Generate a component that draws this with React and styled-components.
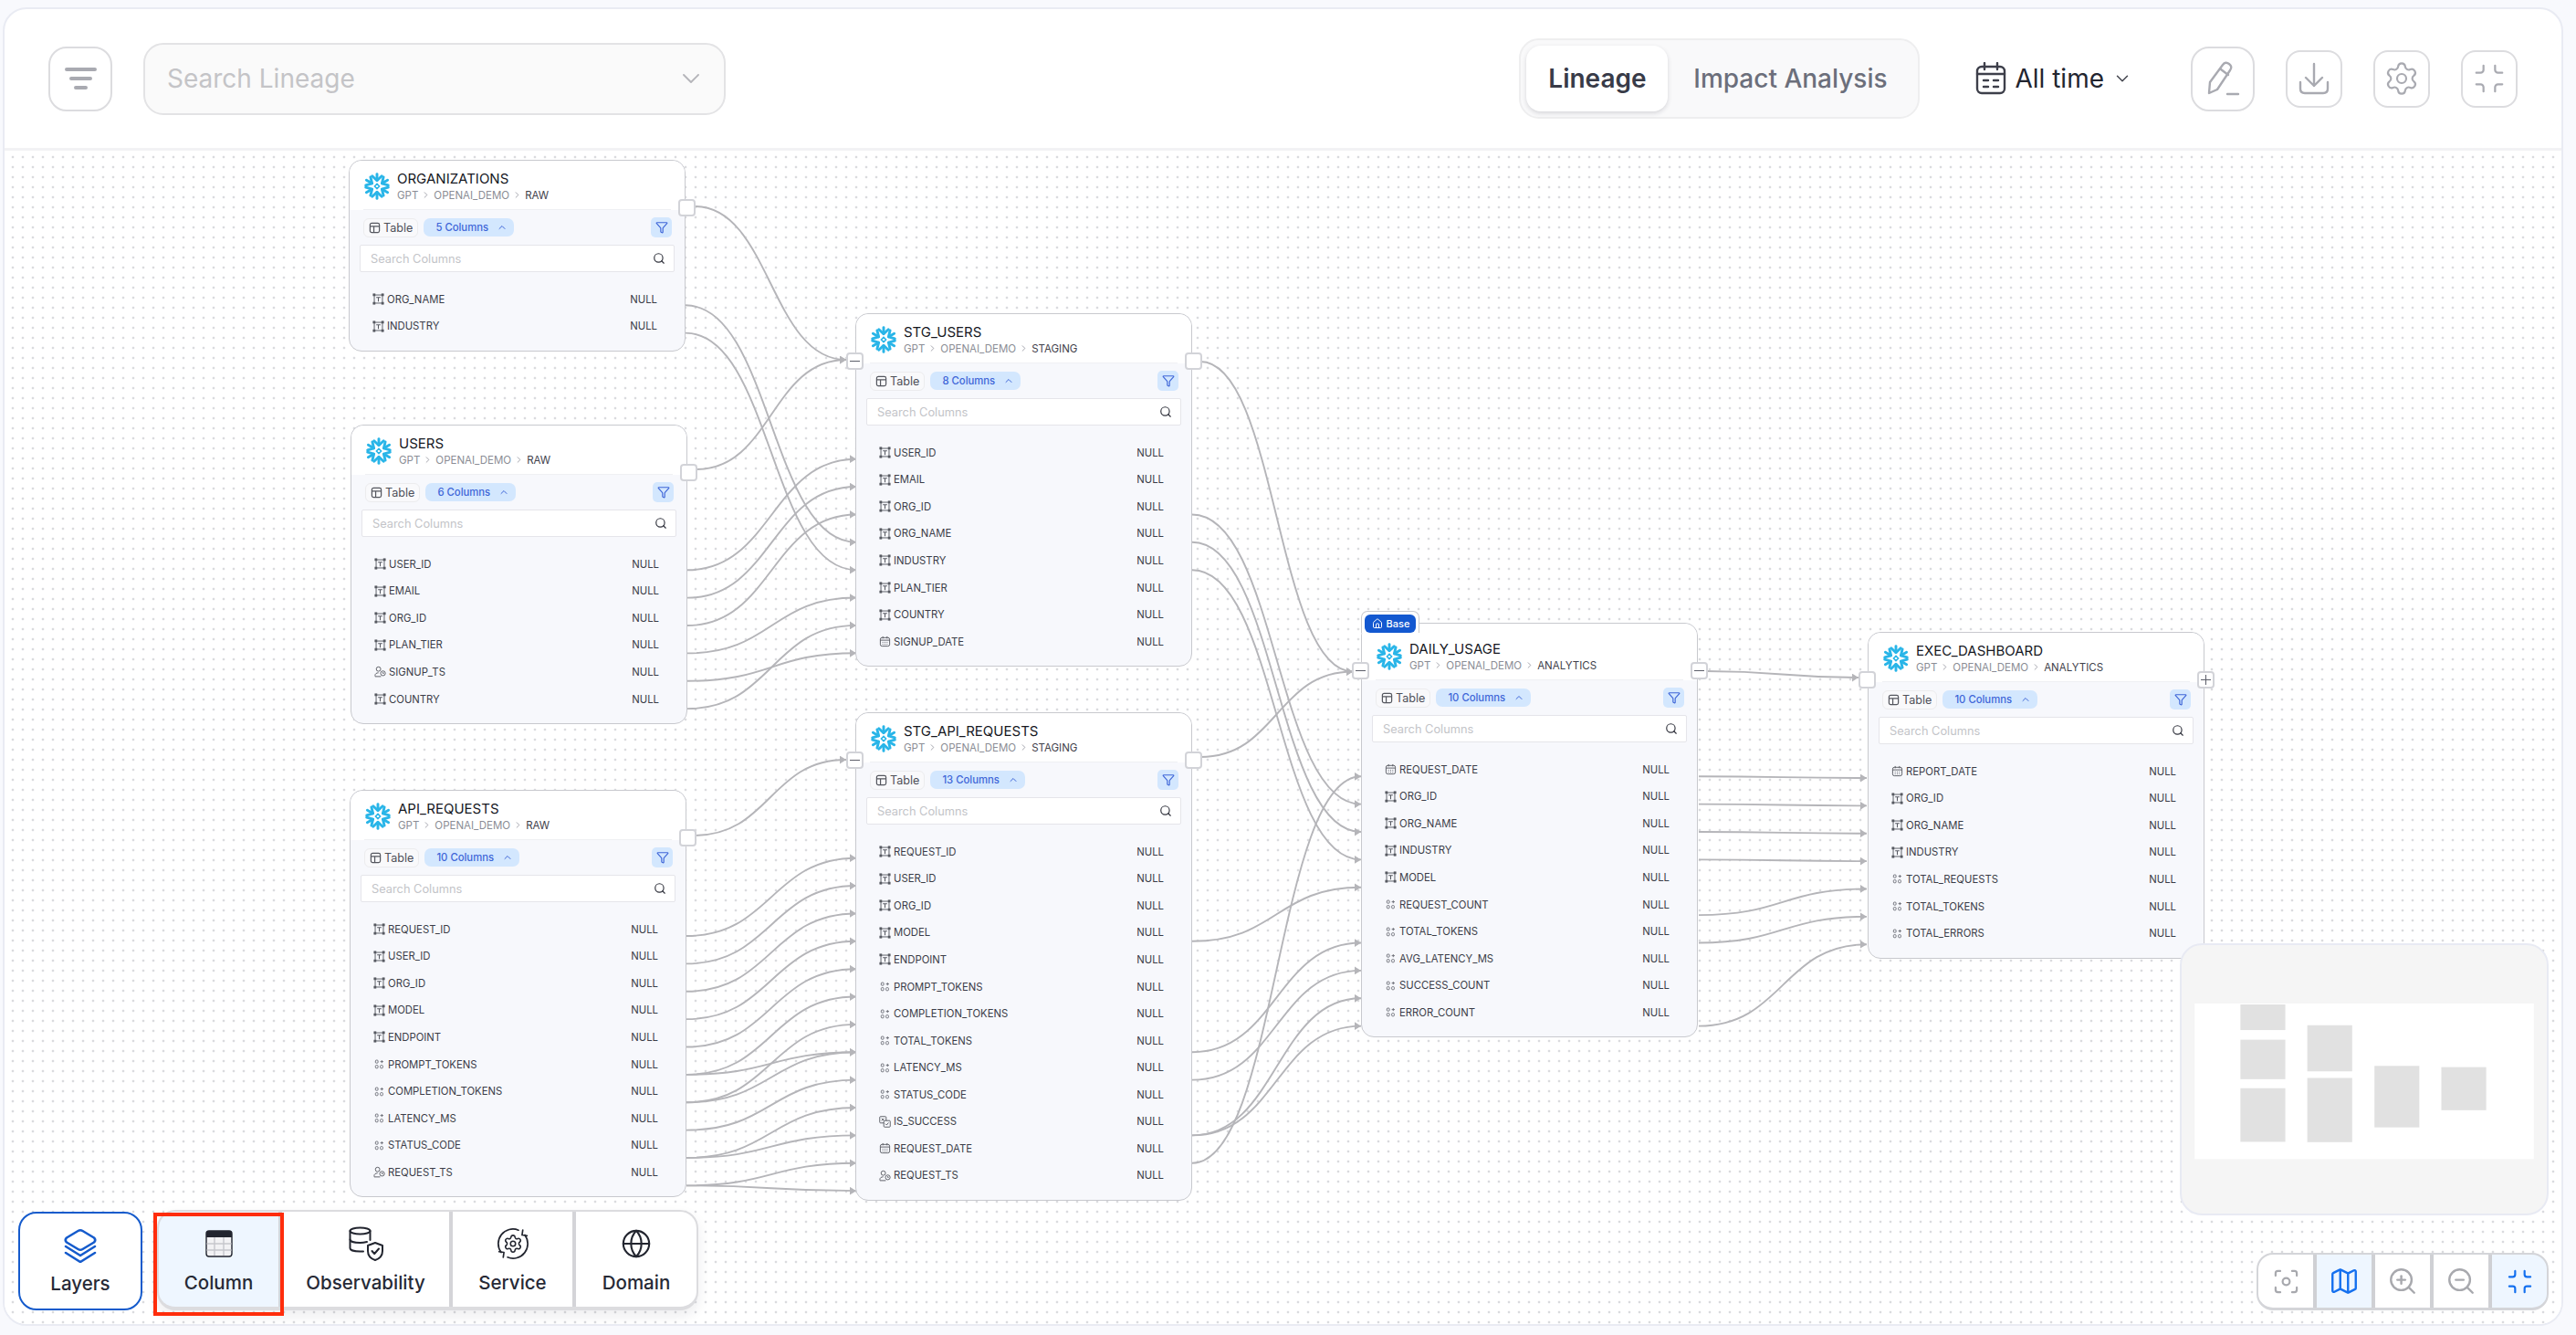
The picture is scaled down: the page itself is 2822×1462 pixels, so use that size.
import React from "react";
import styled, { createGlobalStyle } from "styled-components";
import {
  ChevronDown,
  ChevronRight,
  ChevronUp,
  Focus,
  Globe,
  Home,
  Map as MapIcon,
  Minimize,
  Funnel,
  Search,
  Settings,
  ZoomIn,
  ZoomOut,
} from "lucide-react";

const GlobalStyle = createGlobalStyle`
  html, body {
    margin: 0;
    padding: 0;
    background: #f8f9fd;
  }
  body, body * {
    font-family: Inter, "Noto Sans", "Liberation Sans", sans-serif;
    box-sizing: border-box;
  }
`;

///////////////////////frame/////////////////////
const Page = styled.div`
  width: 100%;
  height: 1462px;
  padding: 8px 14px 10px 3px;
  overflow: hidden;
`;

const Frame = styled.div`
  height: 100%;
  display: flex;
  flex-direction: column;
  background: #ffffff;
  border: 2px solid #e9ebf3;
  border-radius: 26px;
  overflow: hidden;
`;

const Header = styled.header`
  height: 155px;
  flex-shrink: 0;
  display: flex;
  align-items: center;
  padding: 0 48px 0 48px;
  border-bottom: 3px solid #f2f2f4;
`;

const IconButton = styled.button`
  width: ${(p) => p.$size}px;
  height: ${(p) => p.$size + 1}px;
  flex-shrink: 0;
  display: flex;
  align-items: center;
  justify-content: center;
  padding: 0;
  background: #ffffff;
  border: 2px solid #dcdcdf;
  border-radius: ${(p) => (p.$size > 64 ? 20 : 16)}px;
  color: #a9aab1;
  margin-left: ${(p) => p.$gap || 0}px;
`;

const LineageSearch = styled.div`
  width: 638px;
  height: 79px;
  margin-left: 34px;
  display: flex;
  align-items: center;
  justify-content: space-between;
  padding: 0 20px 0 24px;
  background: #fafafa;
  border: 2px solid #e3e3e5;
  border-radius: 22px;
  font-size: 28px;
  color: #c4c4c7;
`;

const Tabs = styled.div`
  margin-left: auto;
  display: flex;
  align-items: center;
  height: 88px;
  padding: 0 6px;
  background: #f9f9fa;
  border: 2px solid #eeeeef;
  border-radius: 22px;
`;

const Tab = styled.div`
  height: 72px;
  width: ${(p) => p.$width}px;
  display: flex;
  align-items: center;
  justify-content: center;
  font-size: 28px;
  font-weight: ${(p) => (p.$active ? 600 : 500)};
  color: ${(p) => (p.$active ? "#383b48" : "#6c6f7b")};
  background: ${(p) => (p.$active ? "#ffffff" : "transparent")};
  border-radius: 16px;
  box-shadow: ${(p) => (p.$active ? "0 2px 5px rgba(30, 30, 50, 0.16)" : "none")};
`;

const TimeRange = styled.div`
  display: flex;
  align-items: center;
  gap: 9px;
  margin-left: 61px;
  margin-right: 64px;
  font-size: 28px;
  color: #23252f;
`;

///////////////////////canvas/////////////////////
const Canvas = styled.div`
  position: relative;
  flex: 1;
  overflow: hidden;
  background-color: #ffffff;
  background-image: radial-gradient(circle, #a6a8b0 0.8px, transparent 1.1px);
  background-size: 11px 11px;
  background-position: 3.5px 1.5px;
`;

// viewport of the diagram, nodes inside it are placed in screen coordinates
const Viewport = styled.div`
  position: absolute;
  left: -5px;
  top: -165px;
  width: 2822px;
  height: 1462px;
`;

const EdgeLayer = styled.svg`
  position: absolute;
  left: 0;
  top: 0;
  width: 2822px;
  height: 1462px;
`;

///////////////////////node/////////////////////
const NodeBox = styled.div`
  position: absolute;
  left: ${(p) => p.$x}px;
  top: ${(p) => p.$y}px;
  width: 369px;
  background: #f7f8fc;
  border: 1.5px solid #c8c9ce;
  border-radius: 14px;
`;

const NodeHead = styled.div`
  display: flex;
  align-items: center;
  height: ${(p) => (p.$base ? 62 : 54)}px;
  padding: ${(p) => (p.$base ? "10px" : "2px")} 14px 0 15px;
  gap: 7px;
  background: #ffffff;
  border-radius: 14px 14px 0 0;
  position: relative;
  &::after {
    content: "";
    position: absolute;
    left: 15px;
    right: 15px;
    bottom: 0;
    height: 1px;
    background: #eff0f3;
  }
`;

const NodeTitle = styled.div`
  font-size: 15px;
  font-weight: 400;
  line-height: 18px;
  color: #16181f;
`;

const Crumbs = styled.div`
  display: flex;
  align-items: center;
  gap: 3px;
  margin-top: 1px;
  font-size: 11.5px;
  line-height: 16px;
  color: #8b8d95;
  strong {
    font-weight: 400;
    color: #3f414b;
  }
  svg {
    color: #9c9ea6;
  }
`;

const NodeBar = styled.div`
  display: flex;
  align-items: center;
  height: 38px;
  padding: 0 14px 0 15px;
  gap: 6px;
`;

const TypeChip = styled.div`
  display: flex;
  align-items: center;
  gap: 3px;
  height: 21px;
  padding: 0 5px;
  background: #f9f9fb;
  border: 1px solid #ececee;
  border-radius: 6px;
  font-size: 12.6px;
  color: #4e5059;
`;

const CountChip = styled.div`
  display: flex;
  align-items: center;
  gap: 9px;
  height: 20px;
  padding: 0 7px 0 13px;
  background: #d3e7fe;
  border-radius: 7px;
  font-size: 11.3px;
  font-weight: 500;
  color: #3f66d8;
`;

const FilterChip = styled.div`
  width: 23px;
  height: 22px;
  margin-left: auto;
  display: flex;
  align-items: center;
  justify-content: center;
  background: #d3e7fe;
  border-radius: 5px;
  color: #3f66d8;
`;

const ColumnSearch = styled.div`
  height: 30px;
  margin: 0 11px 15px;
  display: flex;
  align-items: center;
  justify-content: space-between;
  padding: 0 9px 0 11px;
  background: #ffffff;
  border: 1.5px solid #e5e5ea;
  border-radius: 2px;
  font-size: 12.8px;
  color: #c3c4c8;
  svg {
    color: #33353f;
  }
`;

const Rows = styled.div`
  padding-bottom: 12px;
`;

const Row = styled.div`
  height: 29.55px;
  display: flex;
  align-items: center;
  gap: 3px;
  padding: 0 30px 0 25px;
  font-size: 11.3px;
  color: #3b3d48;
  span:last-child {
    margin-left: auto;
  }
`;

const Handle = styled.div`
  position: absolute;
  top: 42px;
  ${(p) => (p.$side === "left" ? "left: -11.5px;" : "right: -12px;")}
  width: 19px;
  height: 19px;
  display: flex;
  align-items: center;
  justify-content: center;
  background: #ffffff;
  border: 2px solid #d2d3d8;
  border-radius: 4px;
  color: #5c5e69;
  font-size: 0;
  &::before {
    content: "";
    display: ${(p) => (p.$mark ? "block" : "none")};
    width: 11px;
    height: 1.5px;
    background: currentColor;
  }
  &::after {
    content: "";
    display: ${(p) => (p.$mark === "plus" ? "block" : "none")};
    position: absolute;
    width: 1.5px;
    height: 11px;
    background: currentColor;
  }
`;

const BaseTab = styled.div`
  position: absolute;
  z-index: 2;
  left: -1.5px;
  top: -14px;
  padding: 3px 3px 0;
  background: #ffffff;
  border: 1.5px solid #c8c9ce;
  border-bottom: none;
  border-radius: 7px 7px 0 0;
`;

const BaseBadge = styled.div`
  display: flex;
  align-items: center;
  gap: 4px;
  height: 20px;
  padding: 0 7px 0 8px;
  background: #1358d0;
  border-radius: 6px;
  font-size: 11px;
  font-weight: 500;
  color: #ffffff;
`;

///////////////////////overlays/////////////////////
const Dock = styled.div`
  position: absolute;
  left: 15px;
  bottom: 15px;
  display: flex;
  align-items: flex-end;
  gap: 16px;
`;

const LayersButton = styled.div`
  width: 136px;
  height: 108px;
  display: flex;
  flex-direction: column;
  align-items: center;
  gap: 10px;
  padding-top: 16px;
  background: #ffffff;
  border: 2px solid #155bcc;
  border-radius: 20px;
  font-size: 20.5px;
  font-weight: 500;
  color: #272a36;
`;

const DockGroup = styled.div`
  height: 110px;
  display: flex;
  background: #d4d4d8;
  border: 2px solid #dcdcdf;
  border-bottom-width: 4px;
  border-radius: 20px;
  overflow: hidden;
  gap: 4px;
  box-shadow: 0 6px 14px rgba(30, 30, 50, 0.08);
`;

const DockItem = styled.div`
  width: ${(p) => p.$width}px;
  display: flex;
  flex-direction: column;
  align-items: center;
  gap: 12px;
  padding-top: 17px;
  background: ${(p) => (p.$active ? "#eef6ff" : "#ffffff")};
  font-size: 20.5px;
  font-weight: 500;
  color: #272a36;
`;

const DockIcon = styled.div`
  height: 36px;
  display: flex;
  align-items: center;
  justify-content: center;
`;

const RedMark = styled.div`
  position: absolute;
  left: 163px;
  bottom: 9px;
  width: 143px;
  height: 113px;
  border: 4px solid #ff2d0c;
`;

const MiniMap = styled.div`
  position: absolute;
  right: 14px;
  bottom: 119px;
  width: 404px;
  height: 298px;
  background: #f5f5f5;
  border: 2px solid #e8eaf3;
  border-radius: 24px;
  overflow: hidden;
  svg {
    display: block;
  }
`;

const ZoomBar = styled.div`
  position: absolute;
  right: 14px;
  bottom: 15px;
  display: flex;
  gap: 4px;
  height: 63px;
  background: #cfd0d4;
  border: 2px solid #d4d5d9;
  border-bottom-width: 3px;
  border-radius: 18px;
  overflow: hidden;
`;

const ZoomCell = styled.div`
  width: 60px;
  display: flex;
  align-items: center;
  justify-content: center;
  background: ${(p) => (p.$active ? "#eef6ff" : "#ffffff")};
  color: ${(p) => (p.$active ? "#1570ef" : "#a8a9ae")};
`;

///////////////////////drawings/////////////////////
const SnowflakeLogo = () => (
  <svg width="30" height="30" viewBox="-15 -15 30 30" fill="none" style={{ flexShrink: 0 }}>
    {[0, 60, 120, 180, 240, 300].map((deg) => (
      <g key={deg} transform={`rotate(${deg})`} stroke="#29b5e8" strokeWidth="2.9" strokeLinecap="round" strokeLinejoin="round">
        <path d="M0 -13.4V-6.4" />
        <path d="M-5.2 -11.2L0 -6.2L5.2 -11.2" />
      </g>
    ))}
    <path d="M0 -2.6L2.6 0L0 2.6L-2.6 0Z" stroke="#29b5e8" strokeWidth="1.5" fill="#ffffff" />
  </svg>
);

const TableGlyph = () => (
  <svg width="13" height="13" viewBox="0 0 14 14" fill="none" stroke="#55575f" strokeWidth="1.3">
    <rect x="1.5" y="1.5" width="11" height="11" rx="2" />
    <path d="M1.5 5.2H12.5M6 5.2V12.5" />
  </svg>
);

const TextType = () => (
  <svg width="13" height="13" viewBox="0 0 14 14" fill="none" stroke="#55575f" strokeWidth="1">
    <rect x="2.2" y="2.2" width="9.6" height="9.6" />
    <rect x="1" y="1" width="2" height="2" fill="#55575f" />
    <rect x="11" y="1" width="2" height="2" fill="#55575f" />
    <rect x="1" y="11" width="2" height="2" fill="#55575f" />
    <rect x="11" y="11" width="2" height="2" fill="#55575f" />
    <path d="M4.5 5H9.5M7 5V10" strokeWidth="1.1" />
  </svg>
);

const NumberType = () => (
  <svg width="13" height="13" viewBox="0 0 14 14" fill="none" stroke="#6a6c75" strokeWidth="1">
    <rect x="2.5" y="2.2" width="3" height="3.4" rx="1" />
    <rect x="2.5" y="8.2" width="3" height="3.4" rx="1" />
    <rect x="8.2" y="8.2" width="3" height="3.4" rx="1" />
    <path d="M8.2 3.9H11.8M10 2.2V5.6" />
  </svg>
);

const DateType = () => (
  <svg width="13" height="13" viewBox="0 0 14 14" fill="none" stroke="#55575f" strokeWidth="1">
    <rect x="1.5" y="2.5" width="11" height="10" rx="2" />
    <path d="M4.5 1V3.6M9.5 1V3.6M1.5 5.5H12.5M4 8H5M6.5 8H7.5M9 8H10M4 10.2H5M6.5 10.2H7.5M9 10.2H10" />
  </svg>
);

const BoolType = () => (
  <svg width="13" height="13" viewBox="0 0 14 14" fill="none" stroke="#55575f" strokeWidth="1">
    <rect x="0.8" y="0.8" width="7.6" height="7.6" rx="1" />
    <rect x="5.6" y="5.6" width="7.6" height="7.6" rx="1" fill="#f7f8fc" />
    <path d="M3 3L6 6M6 3L3 6M7.6 9.4L9 10.8L11.2 8" />
  </svg>
);

const StampType = () => (
  <svg width="13" height="13" viewBox="0 0 14 14" fill="none" stroke="#55575f" strokeWidth="1">
    <circle cx="5" cy="4" r="2.6" />
    <path d="M1 12.5V11.4C1 9.6 2.6 8.4 5 8.4" />
    <path d="M1 12.8H8" />
    <circle cx="10.3" cy="9" r="2.8" />
    <path d="M10.3 7.6V9.1H11.4" />
  </svg>
);

const TYPE_ICONS = {
  text: TextType,
  num: NumberType,
  date: DateType,
  bool: BoolType,
  ts: StampType,
};

const FilterLines = () => (
  <svg width="36" height="28" viewBox="0 0 36 28" fill="none" stroke="#a9aab1" strokeWidth="4" strokeLinecap="round">
    <path d="M3 4H34M8 14H29M13 24H24" />
  </svg>
);

const CalendarDays = () => (
  <svg width="34" height="36" viewBox="0 0 34 36" fill="none" stroke="#3d3f4a" strokeWidth="2.4" strokeLinecap="round">
    <rect x="2" y="5" width="30" height="29" rx="5" />
    <path d="M10 1V8M24 1V8M2 13H32M9 20H14M20 20H25M9 27H14M20 27H25" />
  </svg>
);

const PencilLine = () => (
  <svg width="38" height="38" viewBox="0 0 38 38" fill="none" stroke="#a9aab1" strokeWidth="2.4" strokeLinecap="round" strokeLinejoin="round">
    <path d="M4 35L5 23L19 4Q22 0 26 3Q30 6 27 10L13 31Z" />
    <path d="M17 9L25 15" />
    <path d="M24 36H36" />
  </svg>
);

const TrayArrow = () => (
  <svg width="36" height="36" viewBox="0 0 36 36" fill="none" stroke="#a9aab1" strokeWidth="2.4" strokeLinecap="round" strokeLinejoin="round">
    <path d="M18 2V26M9 17L18 26L27 17" />
    <path d="M3 22V29Q3 34 8 34H28Q33 34 33 29V22" />
  </svg>
);

const LayersGlyph = () => (
  <svg width="38" height="38" viewBox="0 0 38 38" fill="none" stroke="#155bcc" strokeWidth="2.6" strokeLinecap="round" strokeLinejoin="round">
    <path d="M16.5 3L4 10.5Q1.5 13 4 15.5L16.5 23Q19 24.5 21.5 23L34 15.5Q36.5 13 34 10.5L21.5 3Q19 1.5 16.5 3Z" />
    <path d="M3 20L19 30L35 20" />
    <path d="M3 27L19 37L35 27" />
  </svg>
);

const TableGrid = () => (
  <svg width="30" height="30" viewBox="0 0 30 30" fill="none">
    <rect x="1" y="1" width="28" height="28" rx="3" fill="#f2f2f4" stroke="#22252f" strokeWidth="1.4" />
    <path d="M1 4Q1 1 4 1H26Q29 1 29 4V8H1Z" fill="#22252f" />
    <path d="M10 8V28M20 8V28M1.5 15H28.5M1.5 22H28.5" stroke="#c6c7cc" strokeWidth="1.4" />
  </svg>
);

const DatabaseShield = () => (
  <svg width="38" height="38" viewBox="0 0 38 38" fill="none" stroke="#22252f" strokeWidth="2" strokeLinecap="round" strokeLinejoin="round">
    <ellipse cx="12.5" cy="5" rx="11" ry="3.6" />
    <path d="M1.5 5V24C1.5 26 6 27.6 12.5 27.6H16" />
    <path d="M1.5 14.5C1.5 16.5 6 18 12.5 18C15 18 18 17.5 20 17" />
    <path d="M23.5 5V15" />
    <path d="M29 18L37 21V27C37 32 33.5 35.5 29 37C24.500 35.500 21 32 21 27V21Z" fill="#ffffff" />
    <path d="M25.500 27L28.200 30L33 24.500" />
  </svg>
);

const ServiceGear = () => (
  <svg width="36" height="36" viewBox="0 0 36 36" fill="none" stroke="#22252f" strokeWidth="1.7" strokeLinecap="round" strokeLinejoin="round">
    <Settings x={7} y={7} size={22} strokeWidth={1.7} color="#22252f" />
    <path d="M5 27.500A16 16 0 0 1 24 3.200" />
    <path d="M31 8.500A16 16 0 0 1 12 32.800" />
    <path d="M28 3V8.500H33.500" transform="rotate(8 28 8)" />
    <path d="M8 33V27.500H2.500" transform="rotate(8 8 28)" />
  </svg>
);

// minimap frame, coordinates taken from the reference crop
const MINI_NODES = [
  [219, 237, 149, 85],
  [219, 354, 149, 131],
  [219, 515, 149, 178],
  [441, 306, 149, 153],
  [441, 481, 149, 213],
  [664, 441, 149, 204],
  [886, 445, 149, 143],
];

///////////////////////data/////////////////////
const col = (type, ...names) => names.map((name) => ({ name, type }));

const NODES = [
  {
    name: "ORGANIZATIONS", schema: "RAW", count: 5, x: 382, y: 175, right: "",
    rows: col("text", "ORG_NAME", "INDUSTRY"),
  },
  {
    name: "USERS", schema: "RAW", count: 6, x: 384, y: 465, right: "",
    rows: [
      ...col("text", "USER_ID", "EMAIL", "ORG_ID", "PLAN_TIER"),
      ...col("ts", "SIGNUP_TS"),
      ...col("text", "COUNTRY"),
    ],
  },
  {
    name: "API_REQUESTS", schema: "RAW", count: 10, x: 383, y: 865, right: "",
    rows: [
      ...col("text", "REQUEST_ID", "USER_ID", "ORG_ID", "MODEL", "ENDPOINT"),
      ...col("num", "PROMPT_TOKENS", "COMPLETION_TOKENS", "LATENCY_MS", "STATUS_CODE"),
      ...col("ts", "REQUEST_TS"),
    ],
  },
  {
    name: "STG_USERS", schema: "STAGING", count: 8, x: 937, y: 343, left: "minus", right: "",
    rows: [
      ...col("text", "USER_ID", "EMAIL", "ORG_ID", "ORG_NAME", "INDUSTRY", "PLAN_TIER", "COUNTRY"),
      ...col("date", "SIGNUP_DATE"),
    ],
  },
  {
    name: "STG_API_REQUESTS", schema: "STAGING", count: 13, x: 937, y: 780, left: "minus", right: "",
    rows: [
      ...col("text", "REQUEST_ID", "USER_ID", "ORG_ID", "MODEL", "ENDPOINT"),
      ...col("num", "PROMPT_TOKENS", "COMPLETION_TOKENS", "TOTAL_TOKENS", "LATENCY_MS", "STATUS_CODE"),
      ...col("bool", "IS_SUCCESS"),
      ...col("date", "REQUEST_DATE"),
      ...col("ts", "REQUEST_TS"),
    ],
  },
  {
    name: "DAILY_USAGE", schema: "ANALYTICS", count: 10, x: 1491, y: 682, base: true, left: "minus", right: "minus",
    rows: [
      ...col("date", "REQUEST_DATE"),
      ...col("text", "ORG_ID", "ORG_NAME", "INDUSTRY", "MODEL"),
      ...col("num", "REQUEST_COUNT", "TOTAL_TOKENS", "AVG_LATENCY_MS", "SUCCESS_COUNT", "ERROR_COUNT"),
    ],
  },
  {
    name: "EXEC_DASHBOARD", schema: "ANALYTICS", count: 10, x: 2046, y: 692, left: "", right: "plus",
    rows: [
      ...col("date", "REPORT_DATE"),
      ...col("text", "ORG_ID", "ORG_NAME", "INDUSTRY"),
      ...col("num", "TOTAL_REQUESTS", "TOTAL_TOKENS", "TOTAL_ERRORS"),
    ],
  },
];

// edge anchors: x of the node side, y of the first column, links run [from row, to row]
const PITCH = 30.37;
const GROUPS = [
  { x1: 751, y1: 334.3, x2: 938, y2: 502.7, links: [[0, 3], [1, 4]] },
  { x1: 753, y1: 624.3, x2: 938, y2: 502.7, links: [[0, 0], [1, 1], [2, 2], [3, 5], [4, 7], [5, 6]] },
  {
    x1: 752, y1: 1025, x2: 938, y2: 939.7,
    links: [[0, 0], [1, 1], [2, 2], [3, 3], [4, 4], [5, 5], [5, 7], [6, 6], [6, 7], [7, 8], [8, 9], [8, 10], [9, 11], [9, 12]],
  },
  { x1: 1306, y1: 502.7, x2: 1491, y2: 850.3, links: [[2, 1], [3, 2], [4, 3]] },
  { x1: 1306, y1: 939.7, x2: 1491, y2: 850.3, links: [[3, 4], [7, 6], [8, 7], [10, 8], [10, 9], [11, 0]] },
  { x1: 1861, y1: 850.3, x2: 2045, y2: 852, links: [[0, 0], [1, 1], [2, 2], [3, 3], [5, 4], [6, 5], [9, 6]] },
];

const NODE_LINKS = [
  [761, 226, 927, 394],
  [763, 514, 927, 394],
  [760, 915, 927, 832],
  [1315, 396, 1482, 735.5],
  [1315, 829, 1482, 735.5],
  [1869, 735, 2036, 742],
];

const curve = (x1, y1, x2, y2) => {
  const mid = (x2 - x1) / 2;
  return `M${x1} ${y1}C${x1 + mid} ${y1} ${x2 - mid} ${y2} ${x2} ${y2}`;
};

const EDGES = [
  ...NODE_LINKS.map((l) => curve(...l)),
  ...GROUPS.flatMap((g) =>
    g.links.map(([a, b]) => curve(g.x1, g.y1 + a * PITCH, g.x2, g.y2 + b * PITCH))
  ),
];

///////////////////////////////////////////
const LineageNode = ({ node }) => (
  <NodeBox $x={node.x} $y={node.y}>
    {node.base && (
      <BaseTab>
        <BaseBadge>
          <Home size={12} />
          Base
        </BaseBadge>
      </BaseTab>
    )}
    <NodeHead $base={node.base}>
      <SnowflakeLogo />
      <div>
        <NodeTitle>{node.name}</NodeTitle>
        <Crumbs>
          GPT <ChevronRight size={11} /> OPENAI_DEMO <ChevronRight size={11} />
          <strong>{node.schema}</strong>
        </Crumbs>
      </div>
    </NodeHead>
    <NodeBar>
      <TypeChip>
        <TableGlyph />
        Table
      </TypeChip>
      <CountChip>
        {node.count} Columns
        <ChevronUp size={12} />
      </CountChip>
      <FilterChip>
        <Funnel size={14} />
      </FilterChip>
    </NodeBar>
    <ColumnSearch>
      Search Columns
      <Search size={14} strokeWidth={2} />
    </ColumnSearch>
    <Rows>
      {node.rows.map((row) => {
        const Icon = TYPE_ICONS[row.type];
        return (
          <Row key={row.name}>
            <Icon />
            <span>{row.name}</span>
            <span>NULL</span>
          </Row>
        );
      })}
    </Rows>
    {node.left !== undefined && <Handle $side="left" $mark={node.left} />}
    {node.right !== undefined && <Handle $side="right" $mark={node.right} />}
  </NodeBox>
);

const App = () => {
  return (
    <Page>
      <GlobalStyle />
      <Frame>
        <Header>
          <IconButton $size={70}>
            <FilterLines />
          </IconButton>
          <LineageSearch>
            Search Lineage
            <ChevronDown size={32} strokeWidth={1.4} color="#b5b5ba" />
          </LineageSearch>
          <Tabs>
            <Tab $active $width={155}>Lineage</Tab>
            <Tab $width={268}>Impact Analysis</Tab>
          </Tabs>
          <TimeRange>
            <CalendarDays />
            All time
            <ChevronDown size={22} strokeWidth={1.6} color="#44464f" />
          </TimeRange>
          <IconButton $size={70}>
            <PencilLine />
          </IconButton>
          <IconButton $size={62} $gap={34}>
            <TrayArrow />
          </IconButton>
          <IconButton $size={62} $gap={34}>
            <Settings size={40} strokeWidth={1.3} />
          </IconButton>
          <IconButton $size={62} $gap={34}>
            <Minimize size={38} strokeWidth={1.4} />
          </IconButton>
        </Header>
        <Canvas>
          <Viewport>
            <EdgeLayer viewBox="0 0 2822 1462" fill="none">
              <defs>
                <marker id="edge-arrow" viewBox="0 0 8 10" refX="8" refY="5" markerWidth="7" markerHeight="9" markerUnits="userSpaceOnUse" orient="auto">
                  <path d="M0 0L8 5L0 10Z" fill="#b5b5b9" />
                </marker>
              </defs>
              {EDGES.map((d, i) => (
                <path key={i} d={d} stroke="#b5b5b9" strokeWidth="1.9" markerEnd="url(#edge-arrow)" />
              ))}
            </EdgeLayer>
            {NODES.map((node) => (
              <LineageNode key={node.name} node={node} />
            ))}
          </Viewport>
          <Dock>
            <LayersButton>
              <LayersGlyph />
              Layers
            </LayersButton>
            <DockGroup>
              <DockItem $active $width={131}>
                <DockIcon><TableGrid /></DockIcon>
                Column
              </DockItem>
              <DockItem $width={183}>
                <DockIcon><DatabaseShield /></DockIcon>
                Observability
              </DockItem>
              <DockItem $width={131}>
                <DockIcon><ServiceGear /></DockIcon>
                Service
              </DockItem>
              <DockItem $width={132}>
                <DockIcon><Globe size={34} strokeWidth={1.5} color="#22252f" /></DockIcon>
                Domain
              </DockItem>
            </DockGroup>
          </Dock>
          <RedMark />
          <MiniMap>
            <svg width="400" height="294" viewBox="27 40 1206 891">
              <rect x="67" y="234" width="1126" height="516" fill="#ffffff" />
              {MINI_NODES.map(([x, y, w, h]) => (
                <rect key={`${x}-${y}`} x={x} y={y} width={w} height={h} fill="#e1e1e1" />
              ))}
            </svg>
          </MiniMap>
          <ZoomBar>
            <ZoomCell><Focus size={31} strokeWidth={1.7} /></ZoomCell>
            <ZoomCell $active><MapIcon size={34} strokeWidth={1.7} /></ZoomCell>
            <ZoomCell><ZoomIn size={34} strokeWidth={1.7} /></ZoomCell>
            <ZoomCell><ZoomOut size={34} strokeWidth={1.7} /></ZoomCell>
            <ZoomCell $active><Minimize size={31} strokeWidth={1.7} /></ZoomCell>
          </ZoomBar>
        </Canvas>
      </Frame>
    </Page>
  );
};

export default App;
